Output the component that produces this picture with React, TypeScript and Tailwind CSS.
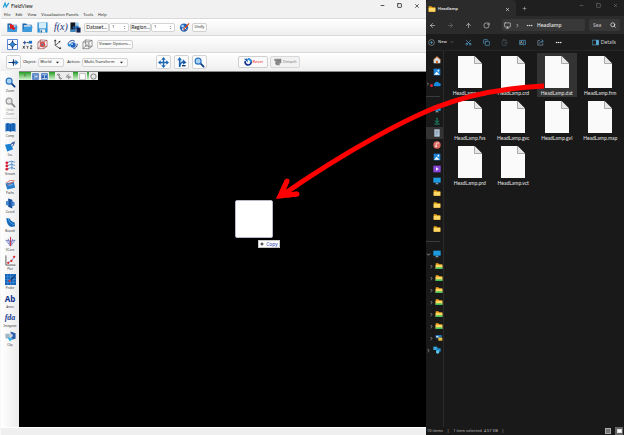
import React, { useState } from "react";
import {
  ArrowLeft,
  ArrowRight,
  ArrowUp,
  ChevronDown,
  ChevronRight,
  ClipboardPaste,
  Copy,
  Ellipsis,
  Minus,
  Monitor,
  Plus,
  RotateCw,
  Scissors,
  Search,
  Share2,
  Square,
  X,
} from "lucide-react";

type IconProps = { children: React.ReactNode; className?: string };

const Icon = ({ children, className = "h-[11px] w-[11px]" }: IconProps) => (
  <svg viewBox="0 0 24 24" fill="none" className={`shrink-0 ${className}`} aria-hidden="true">
    {children}
  </svg>
);

/* ---------- toolbar drawings ---------- */

const FolderShape = () => (
  <>
    <path d="M1 3h8l2 3h10v15H1z" fill="#1565ab" />
    <path d="M4 7h15v5H4z" fill="#e8f3fb" />
    <path d="M1 21 5 10h18l-2 11z" fill="#3d9be0" />
  </>
);

const OpenDataIcon = () => (
  <Icon>
    <FolderShape />
    <path d="M6 4l10 4-2 2 4 4-4 4-4-4-3 2z" fill="#e01b1b" />
  </Icon>
);

const FolderIcon = () => (
  <Icon>
    <FolderShape />
  </Icon>
);

const SaveIcon = () => (
  <Icon>
    <path d="M1 1h22v22H1z" fill="#2b8fd4" />
    <path d="M4 1h16v13H4z" fill="#d5ecfa" />
    <path d="M6 16h12v7H6z" fill="#e9eef2" />
    <path d="M8 18h3v5H8z" fill="#1b5f98" />
  </Icon>
);

const ColorMapIcon = () => (
  <Icon>
    <path d="M1 1h11v20H1z" fill="#101820" />
    <path d="M12 1h7v7h-7z" fill="#9ed2f5" />
    <path d="M12 8h7v7h-7z" fill="#2d7fd0" />
    <path d="M6 9h6v6H6z" fill="#1c4f8c" />
    <path d="M14 12h9v11h-9z" fill="#0d1f4a" />
    <path d="M1 16h11v5H1z" fill="#3a8fd0" />
  </Icon>
);

const BrushIcon = () => (
  <Icon>
    <circle cx="11" cy="12" r="9" fill="#2463b4" />
    <circle cx="8" cy="9" r="3" fill="#9cd2ff" />
    <circle cx="9" cy="16" r="2.5" fill="#e6edf5" />
    <path d="M10 17 22 3" stroke="#d4511f" strokeWidth="3" />
    <path d="M12 12l4 4" stroke="#fff" strokeWidth="2" />
  </Icon>
);

const CrosshairIcon = () => (
  <Icon>
    <path d="M1 1h22v22H1z" fill="#f4f8ff" stroke="#4a78d4" strokeWidth="2" />
    <path d="M12 3v18M3 12h18" stroke="#102a66" strokeWidth="2.5" />
    <path d="M12 6l6 6-6 6-6-6z" fill="#2f86d8" stroke="#14366f" strokeWidth="1.5" />
  </Icon>
);

const XyzIcon = () => (
  <Icon>
    <path d="M2 8h8M6 4v8" stroke="#1d3f8a" strokeWidth="2" />
    <path d="M11 8h4" stroke="#333" strokeWidth="2" />
    <path d="M15 4h7v6h-7z" fill="#1c6fc9" />
    <path d="M2 15l4 6M6 15l-4 6M10 15l2 3 2-3M12 18v3M18 15h4l-4 6h4" stroke="#222" strokeWidth="1.6" />
  </Icon>
);

const Cube = ({ stroke }: { stroke: string }) => (
  <path
    d="M2 7l13-1v15L2 21zM2 7l6-5 14 1-7 3M22 3v13l-7 5M8 2v13l14 1M8 15l-6 6"
    stroke={stroke}
    strokeWidth="1.2"
  />
);

const RedCubeIcon = () => (
  <Icon>
    <Cube stroke="#8a2a2a" />
    <circle cx="12" cy="12" r="6" fill="#e84a4a" />
    <circle cx="12" cy="12" r="3" fill="#6b7a90" />
  </Icon>
);

const AxesIcon = () => (
  <Icon>
    <path d="M7 2v12l11 7M7 14l10-8" stroke="#444" strokeWidth="1.8" />
    <path d="M4 5l3-4 3 4zM15 22h5l-2-5zM14 5l5-1-2 4z" fill="#333" />
  </Icon>
);

const RotateViewIcon = () => (
  <Icon>
    <circle cx="13" cy="13" r="6" fill="#1f63c4" />
    <path d="M3 15a9 9 0 0 1 14-10M22 10a9 9 0 0 1-8 11" stroke="#1d3f8a" strokeWidth="2" />
    <path d="M1 10l4 8 3-6z" fill="#1590e0" />
    <circle cx="11" cy="11" r="2" fill="#cfe8ff" />
  </Icon>
);

const WireCubeIcon = () => (
  <Icon>
    <Cube stroke="#555" />
    <path d="M6 9l10 9M16 9L6 18" stroke="#888" strokeWidth="1.2" />
  </Icon>
);

const MoveObjectIcon = () => (
  <Icon>
    <path d="M1 12h20M12 5v14" stroke="#1a4f93" strokeWidth="2.5" />
    <path d="M16 6l7 6-7 6z" fill="#1a6fc0" />
    <path d="M8 12l4-4 4 4-4 4z" fill="#14366f" />
  </Icon>
);

const PanIcon = () => (
  <Icon>
    <path d="M12 3v18M3 12h18" stroke="#1f68b3" strokeWidth="3" />
    <path d="M12 0l5 6H7zM12 24l5-6H7zM0 12l6-5v10zM24 12l-6-5v10z" fill="#1f68b3" />
  </Icon>
);

const AxisMoveIcon = () => (
  <Icon>
    <path d="M8 22V5" stroke="#1f68b3" strokeWidth="3.500" />
    <path d="M8 0l5 7H3z" fill="#1f68b3" />
    <path d="M8 20Q10 10 17 11" stroke="#1a5ca6" strokeWidth="3" />
    <path d="M15 5l8 7-8 5z" fill="#1a5ca6" />
    <path d="M13 19h8" stroke="#163f78" strokeWidth="3" />
  </Icon>
);

const MagnifierIcon = ({ gray = false }: { gray?: boolean }) => (
  <Icon>
    <path d="M13 13l8 8" stroke={gray ? "#8a8a8a" : "#123f86"} strokeWidth="4" strokeLinecap="round" />
    <circle cx="9" cy="9" r="6.5" fill={gray ? "#e4e4e4" : "#a9d4f8"} stroke={gray ? "#9a9a9a" : "#2b74c4"} strokeWidth="2.5" />
  </Icon>
);

const ResetIcon = () => (
  <Icon className="h-2 w-2">
    <path d="M4 9a9 9 0 1 0 8-6" stroke="#12308c" strokeWidth="5" />
    <path d="M12 3a9 9 0 0 1 9 9" stroke="#2aa0e8" strokeWidth="5" />
    <path d="M0 2h11v11z" fill="#1255b0" />
  </Icon>
);

const DetachIcon = () => (
  <Icon className="h-2 w-2">
    <path d="M1 2h7v7H1zM6 4h16v12h-5v6H7l-4-6z" fill="#8a8a8a" />
    <path d="M11 2v6M15 2v6M19 2v6" stroke="#666" strokeWidth="2" />
  </Icon>
);

/* ---------- left side panel drawings ---------- */

const panels: { label: string; icon: React.ReactNode }[] = [
  {
    label: "Comp",
    icon: (
      <Icon>
        <path d="M1 4q5-4 11 0 6-4 11 0v17q-5-3-11 0-6-3-11 0z" fill="#1d6fc4" />
        <path d="M6 3v17M12 4v17M18 3v17" stroke="#0e3f80" strokeWidth="1.3" />
      </Icon>
    ),
  },
  {
    label: "Iso",
    icon: (
      <Icon>
        <path d="M0 8l12-2 6 12-13 5z" fill="#1a7fd0" />
        <path d="M12 9q5-8 10-7M14 5h7M20 6l-4 6" stroke="#23458f" strokeWidth="2" />
      </Icon>
    ),
  },
  {
    label: "Stream",
    icon: (
      <Icon>
        <path d="M6 5q8-5 16 0M6 12q8-5 16 0M6 19q8-5 16 0M15 3v18" stroke="#2a78c8" strokeWidth="1.6" />
        <circle cx="4" cy="6" r="3" fill="#d81e34" />
        <circle cx="4" cy="13" r="3" fill="#d81e34" />
        <circle cx="4" cy="20" r="3" fill="#d81e34" />
      </Icon>
    ),
  },
  {
    label: "Paths",
    icon: (
      <Icon>
        <path d="M1 10l18-4 3 13-17 4z" fill="#2c7dcb" />
        <path d="M2 9q8-9 19-5M5 13l14-7" stroke="#d8675e" strokeWidth="2" />
        <path d="M8 14l9-2" stroke="#8ec5f0" strokeWidth="2" />
      </Icon>
    ),
  },
  {
    label: "Coord",
    icon: (
      <Icon>
        <path d="M7 1l9 3v19l-9-4z" fill="#164f98" />
        <path d="M2 7l9-2 10 4v8l-9 1L2 15z" fill="#2a73c9" fillOpacity="0.85" />
        <path d="M11 5v13" stroke="#0e3370" strokeWidth="2" />
      </Icon>
    ),
  },
  {
    label: "Bound",
    icon: (
      <Icon>
        <path d="M3 2l8 2q1 6 10 8l1 8-8 2Q3 18 3 2z" fill="#1668b8" />
        <path d="M7 4q2 9 13 13" stroke="#4fa5e8" strokeWidth="2" />
      </Icon>
    ),
  },
  {
    label: "VCore",
    icon: (
      <Icon>
        <path d="M12 22L2 9M12 22l10-13M12 22L7 6M12 22l5-16" stroke="#6f78c4" strokeWidth="1.8" />
        <path d="M12 2v20" stroke="#d3404a" strokeWidth="2.5" />
        <path d="M2 9q10 5 20 0" stroke="#5566b0" strokeWidth="1.5" />
      </Icon>
    ),
  },
  {
    label: "Plot",
    icon: (
      <Icon>
        <path d="M2 1v21h21" stroke="#555" strokeWidth="2" />
        <path d="M6 17l6-3 4-4 5-7" stroke="#55a" strokeWidth="1.5" />
        <circle cx="7" cy="17" r="2.5" fill="#dc2434" />
        <circle cx="14" cy="13" r="2.5" fill="#dc2434" />
        <circle cx="20" cy="4" r="2.5" fill="#dc2434" />
      </Icon>
    ),
  },
  {
    label: "Probe",
    icon: (
      <Icon>
        <path d="M0 0h24v24H0z" fill="#1463b8" />
        <path d="M6 0v24M12 0v24M18 0v24M0 6h24M0 12h24M0 18h24" stroke="#5aa7ea" strokeWidth="1" />
        <path d="M12 14l9-10" stroke="#1b2f5a" strokeWidth="2.5" />
        <circle cx="10" cy="15" r="2.5" fill="#e23b3b" />
      </Icon>
    ),
  },
  { label: "Anno", icon: <b className="h-[11px] text-[8px] leading-[11px] text-[#12338f]">Ab</b> },
  {
    label: "Integrate",
    icon: (
      <i className="h-[11px] font-['Liberation_Serif',serif] text-[8px] leading-[11px] font-bold text-[#1c3f94]">fda</i>
    ),
  },
  {
    label: "Clip",
    icon: (
      <Icon>
        <path d="M12 1l11 4v12l-9 2z" fill="#2e5fae" />
        <path d="M1 6h11v10H1z" fill="#9fb4c4" />
        <path d="M5 14l6 9 6-7z" fill="#35b2e6" />
        <circle cx="13" cy="10" r="4" fill="#c8d2da" />
      </Icon>
    ),
  },
];

const PanelButton = ({ label, icon }: { label: string; icon: React.ReactNode }) => (
  <button className="flex h-[19px] w-full flex-col items-center gap-px overflow-hidden">
    {icon}
    <span className="text-[3px] leading-[5px]">{label}</span>
  </button>
);

const Spin = ({ label, width }: { label: string; width: string }) => {
  const [value, setValue] = useState("1");
  return (
    <div className={`flex h-[9px] items-center justify-between rounded-xs border border-[#d4d4d4] bg-white px-0.5 ${width}`}>
      <input
        aria-label={label}
        value={value}
        onChange={(e) => setValue(e.target.value)}
        className="w-2 bg-transparent text-[4px] leading-[6px] outline-none"
      />
      <Icon className="h-[5px] w-[3px]">
        <path d="M5 7l7-8 7 8zM5 17l7 8 7-8z" fill="#777" />
      </Icon>
    </div>
  );
};

const toolButton =
  "flex h-[9px] shrink-0 items-center justify-center rounded-xs border border-[#d0d0d0] bg-[#fafafa] whitespace-nowrap";
const bigButton =
  "flex h-[14px] w-[15px] items-center justify-center rounded-xs border border-[#d4d4d4] bg-[#fcfcfc]";

const Picker = ({ id, label, value, width }: { id: string; label: string; value: string; width: string }) => (
  <>
    <label htmlFor={id} className="mr-0.5">
      {label}
    </label>
    <div className={`mr-[3px] flex h-[9px] items-center rounded-xs border border-[#d4d4d4] bg-[#fafafa] pr-1 ${width}`}>
      <select id={id} className="min-w-0 flex-1 appearance-none bg-transparent pl-px leading-[6px] outline-none">
        <option>{value}</option>
      </select>
      <Icon className="h-[3px] w-[3px]">
        <path d="M0 5h24L12 20z" fill="#222" />
      </Icon>
    </div>
  </>
);

const MiniIcon = ({ children }: { children: React.ReactNode }) => (
  <button className="flex h-2 w-[9px] items-center justify-center bg-[#ececec]">
    <Icon className="h-[7px] w-[7px]">{children}</Icon>
  </button>
);

const Green = ({ children, className }: { children?: React.ReactNode; className: string }) => (
  <div className={`h-2 bg-linear-to-b from-[#169c16] to-[#d6f5d6] text-center leading-2 ${className}`}>{children}</div>
);

const FieldView = () => (
  <section className="flex min-w-0 flex-1 flex-col border-l border-[#f8f8f8] bg-[#f1f1f1] font-['Noto_Sans',sans-serif] text-[4px] leading-[6px] text-[#222]">
    <header className="flex h-[11px] items-center pl-0.5">
      <Icon className="h-[7px] w-[7px]">
        <path d="M1 19L7 4l4 13L20 3" stroke="#1b9ad6" strokeWidth="4" />
      </Icon>
      <span className="ml-px flex-1 font-[Lato,sans-serif] text-[5px]">FieldView</span>
      <div className="flex items-center gap-3 pr-1.5 text-[#333]">
        <button aria-label="Minimize"><Minus className="h-[5px] w-[5px]" strokeWidth={4} /></button>
        <button aria-label="Maximize"><Square className="h-[5px] w-[5px]" strokeWidth={4} /></button>
        <button aria-label="Close"><X className="h-[6px] w-[6px]" strokeWidth={3} /></button>
      </div>
    </header>

    <nav className="flex h-[7px] items-center gap-[5px] pl-[3px]">
      {["File", "Edit", "View", "Visualization Panels", "Tools", "Help"].map((m) => (
        <button key={m}>{m}</button>
      ))}
    </nav>

    <div className="flex h-[17px] items-center border-t border-[#dadada] bg-linear-to-b from-white to-[#efefef] pl-1.5">
      <div className="flex items-center gap-1">
        <button aria-label="Open data"><OpenDataIcon /></button>
        <button aria-label="Open"><FolderIcon /></button>
        <button aria-label="Save"><SaveIcon /></button>
      </div>
      <i className="ml-1.5 w-4 font-['Liberation_Serif',serif] text-[10px] leading-3 text-[#1c3478]">f(x)</i>
      <ColorMapIcon />
      <button className={`${toolButton} ml-[3px] w-[25px] font-[Lato,sans-serif] text-[5px]`}>Dataset...</button>
      <Spin label="Dataset" width="w-5" />
      <button className={`${toolButton} ml-px w-[21px] font-[Lato,sans-serif] text-[5px]`}>Region...</button>
      <Spin label="Region" width="w-6" />
      <div className="ml-1 flex items-center gap-0.5">
        <button aria-label="Paint"><BrushIcon /></button>
        <button className={`${toolButton} w-[15px]`}>Unify</button>
      </div>
    </div>

    <div className="flex h-[17px] items-center border-t border-[#dadada] bg-linear-to-b from-white to-[#efefef] pl-1.5">
      <div className="flex items-center gap-1">
        <CrosshairIcon />
        <XyzIcon />
        <RedCubeIcon />
        <AxesIcon />
        <RotateViewIcon />
        <WireCubeIcon />
        <button className={`${toolButton} w-9`}>Viewer Options...</button>
      </div>
    </div>

    <div className="flex h-[19px] items-center border-t border-[#dadada] bg-linear-to-b from-white to-[#efefef] pl-[5px]">
      <button aria-label="Transform" className={`${bigButton} mr-0.5`}><MoveObjectIcon /></button>
      <Picker id="object" label="Object:" value="World" width="w-[26px]" />
      <Picker id="action" label="Action:" value="Multi-Transform" width="w-[46px]" />
      <div className="ml-[25px] flex gap-[3px]">
        <button aria-label="Pan" className={bigButton}><PanIcon /></button>
        <button aria-label="Axis" className={bigButton}><AxisMoveIcon /></button>
        <button aria-label="Zoom" className={bigButton}><MagnifierIcon /></button>
      </div>
      <div className="ml-[31px] flex gap-0.5">
        <button className="flex h-3 w-[30px] items-center justify-center gap-px rounded-xs border border-[#cfcfcf] bg-[#fafafa] text-[#e22]">
          <ResetIcon />
          Reset
        </button>
        <button className="flex h-3 w-[30px] items-center justify-center gap-px rounded-xs border border-[#d8d8d8] bg-[#f2f2f2] text-[#777]">
          <DetachIcon />
          Detach
        </button>
      </div>
    </div>

    <div className="flex flex-1">
      <aside className="flex w-[18px] flex-col bg-linear-to-r from-white to-[#ececec] pt-[6px] text-[#333]">
        <PanelButton label="Zoom" icon={<MagnifierIcon />} />
        <button className="flex flex-col items-center pt-px text-[3px] leading-1 text-[#888]">
          <MagnifierIcon gray />
          <span>Undo</span>
          <span>Zoom</span>
        </button>
        <hr className="mx-0.5 mt-0.5 mb-[3px] border-[#d8d8d8]" />
        {panels.map((p) => (
          <PanelButton key={p.label} {...p} />
        ))}
      </aside>
      <main className="relative flex-1 border-t border-[#888] bg-black">
        <div className="flex w-[79px] bg-[#e8e8e8]">
          <Green className="w-3">1</Green>
          <MiniIcon>
            <path d="M1 1h22v22H1z" fill="#2a62b8" />
            <path d="M4 7h16M4 17h16M8 12h12" stroke="#fff" strokeWidth="2.5" />
          </MiniIcon>
          <MiniIcon>
            <path d="M1 1h22v22H1z" fill="#2a62b8" />
            <path d="M4 6h16M12 8v8M4 19h16" stroke="#fff" strokeWidth="2.5" />
          </MiniIcon>
          <Green className="w-1.5" />
          <MiniIcon>
            <path d="M3 6l7-3 4 7M10 13l4 8 7-3M7 7l9 10" stroke="#777" strokeWidth="3" />
          </MiniIcon>
          <MiniIcon>
            <path d="M3 13l10-9M5 14h16M13 9v12" stroke="#777" strokeWidth="3" />
          </MiniIcon>
          <Green className="w-[5px]" />
          <MiniIcon>
            <path d="M2 2h20v20H2z" fill="#fff" stroke="#999" strokeWidth="2" />
          </MiniIcon>
          <Green className="w-[2px]" />
          <MiniIcon>
            <circle cx="12" cy="12" r="9" fill="#e8e8e8" stroke="#777" strokeWidth="3" />
          </MiniIcon>
        </div>

        <div className="absolute top-[128px] left-[216px] h-[38px] w-[38px] rounded-xs border border-[#b8b8c8] bg-white" />
        <div className="absolute top-[168px] left-[239px] flex h-2 w-[22px] items-center justify-center gap-0.5 border border-[#c8c8c8] bg-white text-[5px] text-[#2b3fb4]">
          <Plus className="h-1 w-1 text-black" strokeWidth={5} />
          Copy
        </div>
      </main>
    </div>
    <footer className="h-2 border-t border-[#fff] bg-[#efefef]" />
  </section>
);

/* ---------- file explorer ---------- */

const YellowFolder = ({ green = false }: { green?: boolean }) => (
  <Icon className="h-2 w-2">
    <path d="M2 4h8l3 3h9v13H2z" fill="#e9a51d" />
    <path d="M2 9h20v11H2z" fill="#ffd866" />
    {green && <path d="M2 16h20v5H2z" fill="#3fc45c" />}
  </Icon>
);

const MonitorShape = () => (
  <Icon className="h-2 w-2">
    <path d="M1 2h22v15H1z" fill="#1d9be0" />
    <path d="M9 17h6v3h3v2H6v-2h3z" fill="#7f98a8" />
  </Icon>
);

const PictureShape = () => (
  <Icon className="h-2 w-2">
    <path d="M2 2h20v20H2z" fill="#1f86dc" />
    <path d="M3 20l8-9 9 9z" fill="#fff" />
    <circle cx="16" cy="8" r="2.5" fill="#fff" />
  </Icon>
);

const quickAccess: React.ReactNode[] = [
  <Icon className="h-2 w-2">
    <path d="M2 11L12 2l10 9v11H2z" fill="#d8dde2" />
    <path d="M1 12L12 2l11 10" stroke="#e8843a" strokeWidth="3" />
    <path d="M9 14h6v8H9z" fill="#d0682a" />
  </Icon>,
  <PictureShape />,
  <Icon className="h-2 w-2">
    <path d="M5 19a5 5 0 0 1 0-9 7 7 0 0 1 13-1 5 5 0 0 1 1 10z" fill="#1689e0" />
  </Icon>,
];

const libraries: React.ReactNode[] = [
  <MonitorShape />,
  <Icon className="h-2 w-2">
    <path d="M12 2v14M6 11l6 6 6-6M4 21h16" stroke="#22a884" strokeWidth="2.5" />
  </Icon>,
  <Icon className="h-2 w-2">
    <path d="M4 1h16v22H4z" fill="#b9cbdc" />
    <path d="M7 7h10M7 12h10M7 17h6" stroke="#6a8096" strokeWidth="2" />
  </Icon>,
  <Icon className="h-2 w-2">
    <circle cx="12" cy="12" r="11" fill="#dc6a60" />
    <path d="M10 16V7l6-2v3" stroke="#fff" strokeWidth="2" />
    <circle cx="9" cy="16" r="2.5" fill="#fff" />
  </Icon>,
  <PictureShape />,
  <Icon className="h-2 w-2">
    <path d="M1 2h22v20H1z" fill="#8a45d8" />
    <path d="M9 7l8 5-8 5z" fill="#fff" />
  </Icon>,
  <MonitorShape />,
  <YellowFolder />,
  <YellowFolder />,
  <YellowFolder />,
  <YellowFolder />,
];

const NetworkShape = () => (
  <Icon className="h-2 w-2">
    <path d="M1 2h12v10H1z" fill="#3aa8de" />
    <path d="M9 7h14v10H9z" fill="#1f8fd0" />
    <circle cx="14" cy="18" r="5" fill="#5fc7ee" />
  </Icon>
);

const DriveShape = () => (
  <Icon className="h-2 w-2">
    <path d="M2 3h18v10H2z" fill="#2a76b8" />
    <path d="M10 11h12v9H10z" fill="#e8c040" />
    <path d="M4 6h6v4H4z" fill="#e8eef4" />
  </Icon>
);

const files = [
  "HeadLamp.cmp", "HeadLamp.crd", "HeadLamp.dat", "HeadLamp.frm",
  "HeadLamp.fvs", "HeadLamp.gvc", "HeadLamp.gvl", "HeadLamp.map",
  "HeadLamp.prd", "HeadLamp.vct",
];

const TreeRow = ({ children, open = false, nested = false }: { children: React.ReactNode; open?: boolean; nested?: boolean }) => (
  <li className={`flex h-3 items-center justify-between ${nested ? "pl-[3px]" : "pr-0.5"}`}>
    {open ? (
      <ChevronDown className="h-[5px] w-[5px] shrink-0 text-[#ccc]" strokeWidth={3} />
    ) : (
      <ChevronRight className="h-[5px] w-[5px] shrink-0 text-[#ccc]" strokeWidth={3} />
    )}
    {children}
  </li>
);

const Explorer = () => {
  const [selected, setSelected] = useState("HeadLamp.dat");

  return (
    <section className="flex w-[198px] shrink-0 flex-col bg-[#191919] font-['Noto_Sans',sans-serif] text-[4px] leading-[6px] text-[#e4e4e4]">
      <header className="flex h-4 items-start bg-[#1f1f1f]">
        <div className="flex h-4 w-[90px] items-center rounded-t bg-[#2b2b2b] pt-0.5 pr-1.5 pl-0.5">
          <YellowFolder />
          <span className="ml-0.5 flex-1 font-semibold">Headlamp</span>
          <button aria-label="Close tab"><X className="h-[5px] w-[5px]" strokeWidth={3} /></button>
        </div>
        <button aria-label="New tab" className="mt-1.5 ml-1.5"><Plus className="h-[5px] w-[5px]" strokeWidth={2} /></button>
        <div className="mt-[3px] ml-auto flex gap-3 pr-1.5 text-[#999]">
          <button aria-label="Minimize"><Minus className="h-[5px] w-[5px]" strokeWidth={2} /></button>
          <button aria-label="Maximize"><Square className="h-[5px] w-[5px]" strokeWidth={2} /></button>
          <button aria-label="Close"><X className="h-[5px] w-[5px]" strokeWidth={2} /></button>
        </div>
      </header>

      <div className="flex h-[18px] items-center bg-[#2b2b2b] pl-[3px]">
        <div className="flex items-center gap-[11px]">
          <button aria-label="Back"><ArrowLeft className="h-[7px] w-[7px]" /></button>
          <button aria-label="Forward"><ArrowRight className="h-[7px] w-[7px] text-[#777]" /></button>
          <button aria-label="Up"><ArrowUp className="h-[7px] w-[7px]" /></button>
          <button aria-label="Refresh"><RotateCw className="h-[7px] w-[7px]" /></button>
        </div>
        <div className="ml-3 flex h-3 flex-1 items-center rounded-xs bg-[#383838] pl-0.5">
          <Monitor className="h-[7px] w-[7px]" />
          <ChevronRight className="ml-1 h-[5px] w-[5px]" strokeWidth={3} />
          <Ellipsis className="ml-1.5 h-[7px] w-[7px]" strokeWidth={3} />
          <button className="ml-1 text-[5px] font-medium">Headlamp</button>
        </div>
        <div className="mr-1 ml-1 flex h-3 w-[31px] items-center rounded-xs bg-[#383838] px-1">
          <input aria-label="Search" placeholder="Sea" className="min-w-0 flex-1 bg-transparent text-[5px] leading-[6px] outline-none placeholder:text-[#c8c8c8]" />
          <Search className="h-[6px] w-[6px]" strokeWidth={3} />
        </div>
      </div>

      <div className="flex h-[17px] items-center border-b border-[#262626] bg-[#1c1c1c] pr-2 pl-0.5 text-[#ccc]">
        <button className="flex items-center gap-[3px]">
          <Icon className="h-[7px] w-[7px]">
            <circle cx="12" cy="12" r="10" stroke="#9aa" strokeWidth="2" />
            <path d="M12 7v10M7 12h10" stroke="#5ab0e0" strokeWidth="2" />
          </Icon>
          <span className="font-semibold">New</span>
          <ChevronDown className="h-[4px] w-[4px]" />
        </button>
        <div className="ml-[11px] flex flex-1 items-center gap-[11px] text-[#5ab0e0]">
          <button aria-label="Cut"><Scissors className="h-[7px] w-[7px] -rotate-90" /></button>
          <button aria-label="Copy"><Copy className="h-[7px] w-[7px]" /></button>
          <button aria-label="Paste"><ClipboardPaste className="h-[7px] w-[7px] text-[#4c5a62]" /></button>
          <button aria-label="Rename">
            <Icon className="h-[7px] w-[7px]">
              <path d="M14 5H2v14h12M18 5h4v14h-4M16 2v20" stroke="#5ab0e0" strokeWidth="2" />
              <path d="M5 16l3-8 3 8" stroke="#ddd" strokeWidth="2" />
            </Icon>
          </button>
          <button aria-label="Share">
            <Icon className="h-[7px] w-[7px]">
              <path d="M10 5H3v16h17v-6" stroke="#9ab" strokeWidth="2" />
              <path d="M8 16q1-8 12-8M15 2l7 6-7 6" stroke="#5ab0e0" strokeWidth="2" />
            </Icon>
          </button>
          <button aria-label="More" className="text-white"><Ellipsis className="h-[7px] w-[7px]" strokeWidth={3} /></button>
        </div>
        <button className="flex items-center gap-0.5 font-[Lato,sans-serif] text-[5px]">
          <Icon className="h-[7px] w-[7px]">
            <path d="M1 4h22v16H1z" stroke="#5ab0e0" strokeWidth="2" />
            <path d="M14 4h9v16h-9z" fill="#5ab0e0" />
          </Icon>
          Details
        </button>
      </div>

      <div className="flex flex-1">
        <ul className="w-[18px] shrink-0 border-r border-[#2a2a2a] pt-[3px]">
          {quickAccess.map((icon, i) => (
            <li key={i} className="flex h-3 items-center justify-end pr-0.5">
              {i === 2 && <ChevronRight className="h-1 w-1 shrink-0" strokeWidth={3} />}
              {i === 2 && <span className="mt-0.5 h-[3px] w-[3px] shrink-0 rounded-full bg-[#e0243a]" />}
              {icon}
            </li>
          ))}
          <li className="flex h-[13px] items-center"><hr className="w-[14px] border-[#3a3a3a]" /></li>
          {libraries.map((icon, i) => (
            <li key={i} className={`flex h-3 items-center justify-end pr-0.5 ${i === 2 ? "bg-[#333]" : ""}`}>
              {icon}
            </li>
          ))}
          <li className="flex h-[13px] items-center"><hr className="w-[14px] border-[#3a3a3a]" /></li>
          <TreeRow open><MonitorShape /></TreeRow>
          {[0, 1, 2, 3, 4, 5].map((n) => (
            <TreeRow key={n} nested><YellowFolder green /></TreeRow>
          ))}
          <TreeRow nested><DriveShape /></TreeRow>
          <TreeRow><NetworkShape /></TreeRow>
        </ul>

        <div className="grid flex-1 auto-rows-[44px] grid-cols-4 content-start justify-items-center gap-y-px pt-0.5 pr-0.5 pl-1">
          {files.map((name) => (
            <button
              key={name}
              onClick={() => setSelected(name)}
              className={`flex w-10 flex-col items-center gap-0.5 pt-[3px] ${selected === name ? "bg-[#333]" : ""}`}
            >
              <svg viewBox="0 0 24 32" className="h-8 w-6" aria-hidden="true">
                <path d="M0 0h16.500l7.500 7.500V32H0z" fill="#fafafa" />
                <path d="M16.500 0v7.500H24" fill="#e6e6e6" stroke="#8a8a8a" strokeWidth="0.700" />
              </svg>
              <span className="font-[Lato,sans-serif] text-[5px]">{name}</span>
            </button>
          ))}
        </div>
      </div>

      <footer className="flex h-2 items-center gap-1 pl-px text-[#bbb]">
        <span>10 items</span>
        <span>|</span>
        <span>1 item selected&nbsp; 4.57 KB</span>
        <span className="flex-1">|</span>
        <button aria-label="List view" className="h-1.5 w-1.5 border border-[#aaa] bg-[#777]" />
        <button aria-label="Icon view" className="mr-px flex h-2 w-2 items-center justify-center bg-[#666]">
          <span className="h-1 w-[5px] border border-[#ddd] bg-white" />
        </button>
      </footer>
    </section>
  );
};

const App: React.FC = () => (
  <div className="relative flex min-h-screen overflow-hidden">
    <FieldView />
    <Explorer />

    {/* drag path from the data file to the viewport */}
    <svg
      viewBox="0 0 624 435"
      className="pointer-events-none absolute inset-0 h-full w-full"
      fill="none"
      stroke="#ff0000"
      aria-hidden="true"
    >
      <path d="M544 86C500 88 465 96 437 107S350 148 281 196" strokeWidth="5" />
      <path d="M287 181L280 196L297 194" strokeWidth="5" />
      <path d="M287 181L282 192M297 194L288 195" strokeWidth="5" strokeLinecap="round" />
    </svg>
  </div>
);

export default App;
